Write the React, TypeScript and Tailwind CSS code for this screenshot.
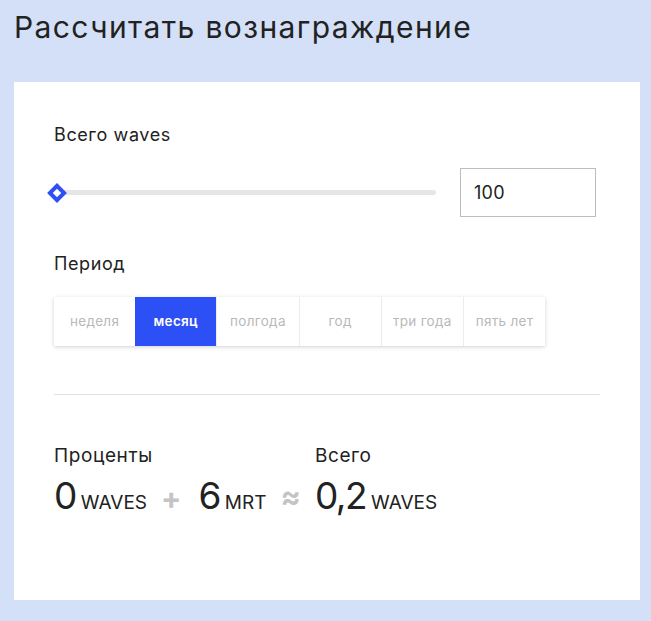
import React, { useState } from "react";

const periods = ["неделя", "месяц", "полгода", "год", "три года", "пять лет"];

function Amount({ value, unit }: { value: string; unit: string }) {
    return (
        <div className="flex items-baseline gap-[5px]">
            <span className="text-[37px] leading-none tracking-[-1.5px]">{value}</span>
            <span className="text-[19px] leading-none">{unit}</span>
        </div>
    );
}

export default function App() {
    const [period, setPeriod] = useState("месяц");
    const [amount, setAmount] = useState("100");

    return (
        <div
            className="min-h-[621px] bg-[#d4e0f8] px-[14px] pt-[9px] text-[#222]"
            style={{ fontFamily: "Inter, 'Noto Sans', sans-serif" }}
        >
            <h1 className="h-[73px] text-[30px] leading-[36px] font-normal tracking-[1.4px]">
                Рассчитать вознаграждение
            </h1>

            <div className="box-border h-[518px] w-[626px] bg-white px-[40px] pt-[41px]">
                <div className="text-[18px] leading-[24px] tracking-[0.6px]">Всего waves</div>

                <div className="mt-[21px] flex items-center gap-[24px]">
                    <div className="relative flex h-[20px] w-[382px] items-center">
                        <div className="h-[5px] w-full rounded-full bg-[#e6e6e6]" />
                        <div className="absolute left-[-4px] top-[3px] flex h-[14px] w-[14px] rotate-45 items-center justify-center bg-[#2c4ff6]">
                            <div className="h-[6px] w-[6px] bg-white" />
                        </div>
                    </div>
                    <input
                        value={amount}
                        onChange={(e) => setAmount(e.target.value)}
                        className="h-[49px] w-[136px] border border-[#bdbdbd] px-[13px] text-[18px] tracking-[0.3px] text-[#222] outline-none"
                    />
                </div>

                <div className="mt-[35px] text-[18px] leading-[24px] tracking-[0.6px]">Период</div>

                <div className="mt-[21px] flex w-[491px] shadow-[0_1px_4px_rgba(0,0,0,0.18)]">
                    {periods.map((p) => (
                        <button
                            key={p}
                            onClick={() => setPeriod(p)}
                            className={
                                p === period
                                    ? "h-[49px] flex-1 bg-[#2c4ff6] text-[13.5px] font-semibold tracking-[0.3px] text-white"
                                    : "h-[49px] flex-1 border-l border-[#ececec] bg-white text-[13.5px] tracking-[0.3px] text-[#b9b9b9] first:border-l-0"
                            }
                        >
                            {p}
                        </button>
                    ))}
                </div>

                <div className="mt-[48px] h-px w-[546px] bg-[#e2e2e2]" />

                <div className="mt-[49px] flex items-end">
                    <div>
                        <div className="text-[19px] leading-[24px] tracking-[0.6px]">Проценты</div>
                        <div className="mt-[9px] flex items-baseline">
                            <Amount value="0" unit="WAVES" />
                            <span className="ml-[14px] mr-[17px] text-[30px] leading-none font-bold text-[#c4c4c4]">+</span>
                            <Amount value="6" unit="MRT" />
                        </div>
                    </div>
                    <span className="ml-[14px] mr-[14px] mb-[3px] text-[30px] leading-none font-bold text-[#c4c4c4]">≈</span>
                    <div>
                        <div className="text-[19px] leading-[24px] tracking-[0.6px]">Всего</div>
                        <div className="mt-[9px] flex items-baseline">
                            <Amount value="0,2" unit="WAVES" />
                        </div>
                    </div>
                </div>
            </div>
        </div>
    );
}
